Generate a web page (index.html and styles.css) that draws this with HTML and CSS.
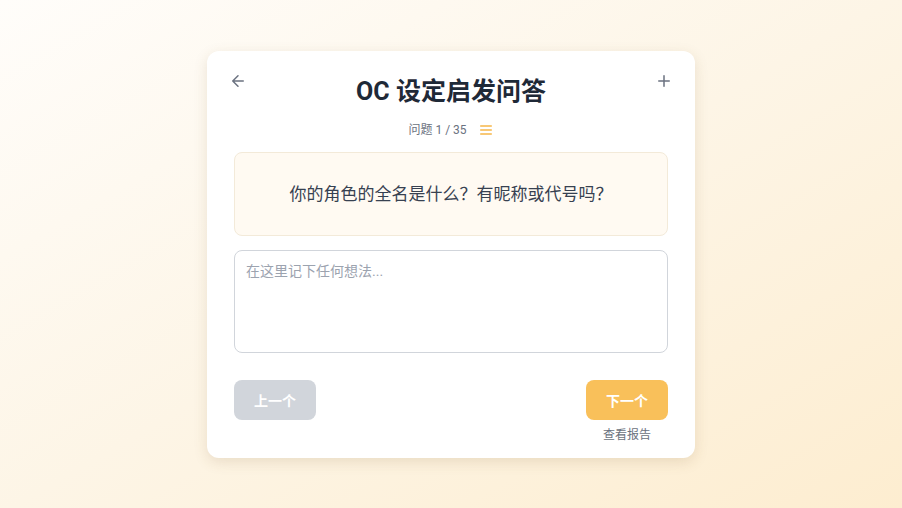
FILE: index.html
```html
<!DOCTYPE html>
<html lang="zh-CN">
<head>
  <meta charset="UTF-8">
  <meta name="viewport" content="width=device-width, initial-scale=1.0">
  <title>OC 设定启发问答</title>
  <link rel="stylesheet" href="styles.css">
</head>
<body>

  <div class="quiz-card">
    <!-- Header -->
    <div class="quiz-header">
      <button class="icon-btn" aria-label="返回">
        <svg viewBox="0 0 24 24" width="18" height="18"><path d="M19 12H5M12 19l-7-7 7-7"/></svg>
      </button>
      <h1>OC 设定启发问答</h1>
      <button class="icon-btn right" aria-label="新建">
        <svg viewBox="0 0 24 24" width="18" height="18"><path d="M12 5v14M5 12h14"/></svg>
      </button>
    </div>

    <div class="progress">
      <span>问题 1 / 35</span>
      <svg class="menu-icon" viewBox="0 0 24 24" width="16" height="16"><path d="M4 6h16M4 12h16M4 18h16"/></svg>
    </div>

    <div class="question-box">你的角色的全名是什么？有昵称或代号吗？</div>

    <textarea class="answer" placeholder="在这里记下任何想法..."></textarea>

    <!-- Navigation -->
    <div class="nav-row">
      <button class="nav-btn prev">上一个</button>
      <div class="next-col">
        <button class="nav-btn next">下一个</button>
        <a href="#" class="report-link">查看报告</a>
      </div>
    </div>
  </div>

</body>
</html>
```

FILE: styles.css
```css
/* General Styling */
body {
  font-family: Roboto, "Noto Sans CJK SC", sans-serif;
  background: linear-gradient(150deg, #fffdfa 0%, #fdf5e6 50%, #fdedd0 100%);
  color: #1f2937;
  margin: 0;
  padding: 0;
  min-height: 100vh;
  display: flex;
  align-items: center;
  justify-content: center;
}

.quiz-card {
  width: 488px;
  box-sizing: border-box;
  background-color: #fff;
  border-radius: 12px;
  box-shadow: 0 4px 14px rgba(120, 90, 40, 0.15);
  padding: 23px 27px 15px;
  display: flex;
  flex-direction: column;
}

/* Header */
.quiz-header {
  display: grid;
  grid-template-columns: 1fr auto 1fr;
  align-items: start;
}

.quiz-header h1 {
  margin: 2px 0 0;
  font-size: 25px;
  line-height: 32px;
  font-weight: 700;
  color: #1f2937;
  text-align: center;
}

.icon-btn {
  background: none;
  border: none;
  padding: 0;
  cursor: pointer;
  width: 24px;
  height: 24px;
  margin-top: -5px;
  display: flex;
  align-items: center;
  justify-content: center;
  justify-self: start;
  margin-left: -8px;
}

.icon-btn.right {
  justify-self: end;
  margin-left: 0;
  margin-right: -8px;
}

.icon-btn svg {
  fill: none;
  stroke: #6b7280;
  stroke-width: 2;
  stroke-linecap: round;
  stroke-linejoin: round;
}

.progress {
  margin-top: 14px;
  display: flex;
  align-items: center;
  justify-content: center;
  gap: 11px;
  font-size: 12px;
  line-height: 16px;
  color: #6b7280;
}

.menu-icon {
  fill: none;
  stroke: #f6b64a;
  stroke-width: 2;
  stroke-linecap: round;
}

.question-box {
  margin-top: 14px;
  background-color: #fffaf2;
  border: 1px solid #f3ead9;
  border-radius: 8px;
  padding: 29px 16px;
  text-align: center;
  font-size: 17px;
  line-height: 24px;
  color: #374151;
}

.answer {
  margin-top: 14px;
  height: 103px;
  box-sizing: border-box;
  width: 100%;
  resize: none;
  border: 1px solid #d1d5db;
  border-radius: 8px;
  padding: 10px 11px;
  font-family: inherit;
  font-size: 14px;
  line-height: 20px;
  color: #374151;
}

.answer::placeholder {
  color: #9ca3af;
}

/* Navigation */
.nav-row {
  margin-top: 27px;
  display: flex;
  justify-content: space-between;
  align-items: flex-start;
}

.next-col {
  display: flex;
  flex-direction: column;
  align-items: center;
}

.nav-btn {
  width: 82px;
  height: 40px;
  border: none;
  border-radius: 8px;
  color: #fff;
  font-family: inherit;
  font-size: 14px;
  font-weight: 700;
  cursor: pointer;
}

.nav-btn.prev {
  background-color: #d1d5db;
}

.nav-btn.next {
  background-color: #f9c05a;
}

.report-link {
  margin-top: 7px;
  font-size: 12px;
  line-height: 16px;
  color: #6b7280;
  text-decoration: none;
}
```
